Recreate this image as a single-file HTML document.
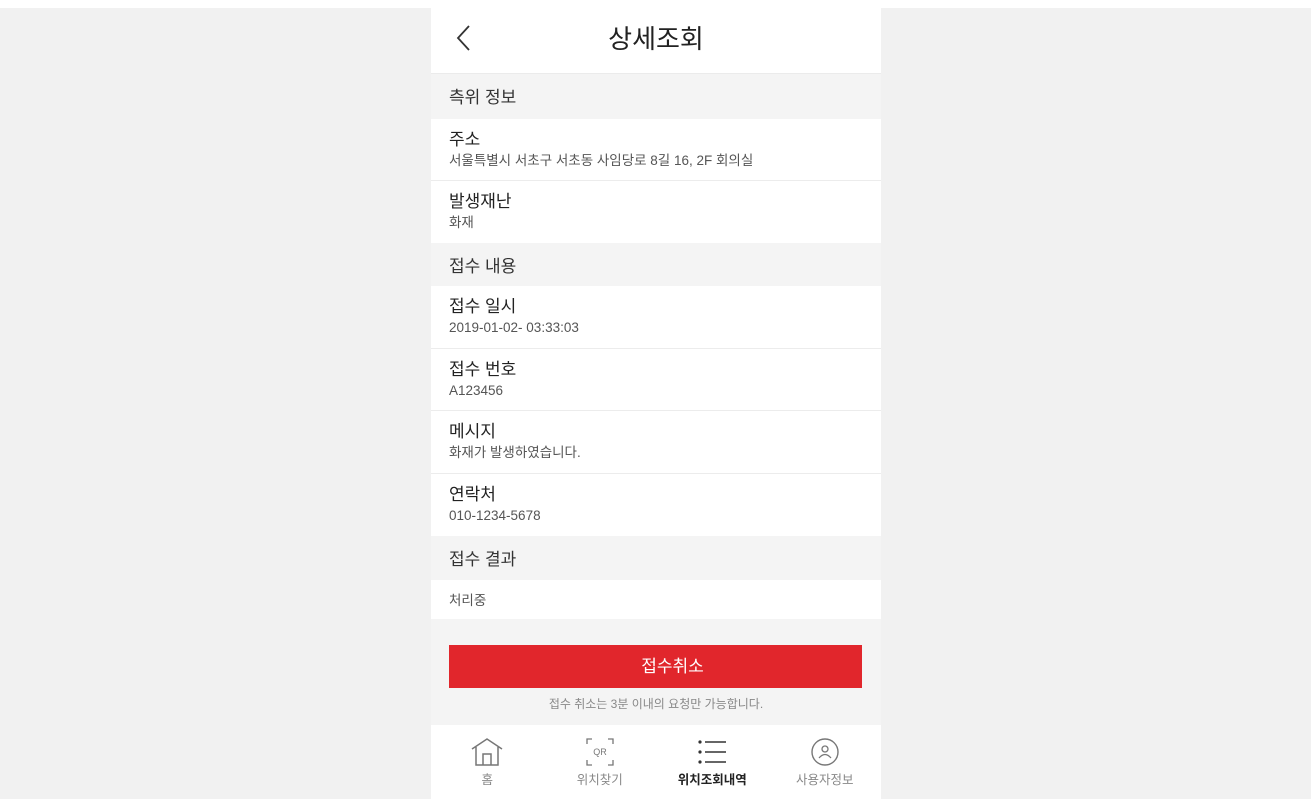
<!DOCTYPE html>
<html><head><meta charset="utf-8"><style>
*{margin:0;padding:0;box-sizing:border-box}
body{width:1311px;height:799px;background:#f1f1f1;font-family:"Liberation Sans","Noto Sans CJK KR",sans-serif;color:#222;position:relative;overflow:hidden}
.top{position:absolute;left:0;top:0;width:1311px;height:8px;background:#fff}
.app{position:absolute;left:431px;top:8px;width:450px;height:791px;background:#f4f4f4}
.hdr{height:66px;background:#fff;position:relative;border-bottom:1px solid #ebebeb}
.hdr h1{font-size:26px;font-weight:400;text-align:center;line-height:62px}
.sec{height:44px;padding-left:18px;font-size:17px;line-height:48px;color:#333}
.item{background:#fff;padding:10px 18px 0;border-bottom:1px solid #ececec}
.item .t{font-size:17px;line-height:22px;color:#222}
.item .v{font-size:13.5px;color:#555;line-height:20px}
.btn{position:absolute;left:18px;top:637px;width:413px;height:43px;background:#e1262c;color:#fff;font-size:17px;text-align:center;line-height:43px;padding-left:34px}
.note{position:absolute;left:0;top:687px;width:450px;text-align:center;font-size:12px;color:#888}
.nav{position:absolute;left:0;top:717px;width:450px;height:74px;background:#fff;display:flex}
.nav div{flex:1;text-align:center;font-size:12.5px;color:#888;position:relative}
.nav svg{display:block;margin:12px auto 2px}
</style></head><body>
<div class="top"></div>
<div class="app">
<div class="hdr"><svg style="position:absolute;left:24px;top:16px" width="18" height="28" viewBox="0 0 18 28"><path d="M14 2 L3 14 L14 26" fill="none" stroke="#333" stroke-width="1.8"/></svg><h1>상세조회</h1></div>
<div class="sec" style="height:45px">측위 정보</div>
<div class="item" style="height:62px"><div class="t">주소</div><div class="v">서울특별시 서초구 서초동 사임당로 8길 16, 2F 회의실</div></div>
<div class="item" style="height:62px;border:0"><div class="t">발생재난</div><div class="v">화재</div></div>
<div class="sec" style="height:43px">접수 내용</div>
<div class="item" style="height:63px"><div class="t">접수 일시</div><div class="v">2019-01-02- 03:33:03</div></div>
<div class="item" style="height:62px"><div class="t">접수 번호</div><div class="v">A123456</div></div>
<div class="item" style="height:63px"><div class="t">메시지</div><div class="v">화재가 발생하였습니다.</div></div>
<div class="item" style="height:62px;border:0"><div class="t">연락처</div><div class="v">010-1234-5678</div></div>
<div class="sec" style="height:44px">접수 결과</div>
<div class="item" style="height:39px;border:0;padding-top:11px"><div class="v">처리중</div></div>
<div class="btn">접수취소</div>
<div class="note">접수 취소는 3분 이내의 요청만 가능합니다.</div>
<div class="nav">
<div><svg width="34" height="30" viewBox="0 0 34 30"><path d="M2 12 L17 2 L32 12 M6 10 V28 H28 V10 M13 28 V17 H21 V28" fill="none" stroke="#777" stroke-width="1.5"/></svg>홈</div>
<div><svg width="30" height="30" viewBox="0 0 30 30"><path d="M2 7V2H7 M23 2H28V7 M2 23V28H7 M23 28H28V23" fill="none" stroke="#777" stroke-width="1.3"/><text x="15" y="18" font-size="9" text-anchor="middle" fill="#777" font-family="Liberation Sans">QR</text></svg>위치찾기</div>
<div style="color:#222;font-weight:bold"><svg width="30" height="30" viewBox="0 0 30 30"><circle cx="3" cy="5" r="1.6" fill="#333"/><circle cx="3" cy="15" r="1.6" fill="#333"/><circle cx="3" cy="25" r="1.6" fill="#333"/><path d="M8 5H29M8 15H29M8 25H29" stroke="#333" stroke-width="1.5"/></svg>위치조회내역</div>
<div><svg width="30" height="30" viewBox="0 0 30 30"><circle cx="15" cy="15" r="13" fill="none" stroke="#777" stroke-width="1.4"/><circle cx="15" cy="12" r="3" fill="none" stroke="#777" stroke-width="1.3"/><path d="M9 21 Q15 14 21 21" fill="none" stroke="#777" stroke-width="1.3"/></svg>사용자정보</div>
</div>
</div>
</body></html>
